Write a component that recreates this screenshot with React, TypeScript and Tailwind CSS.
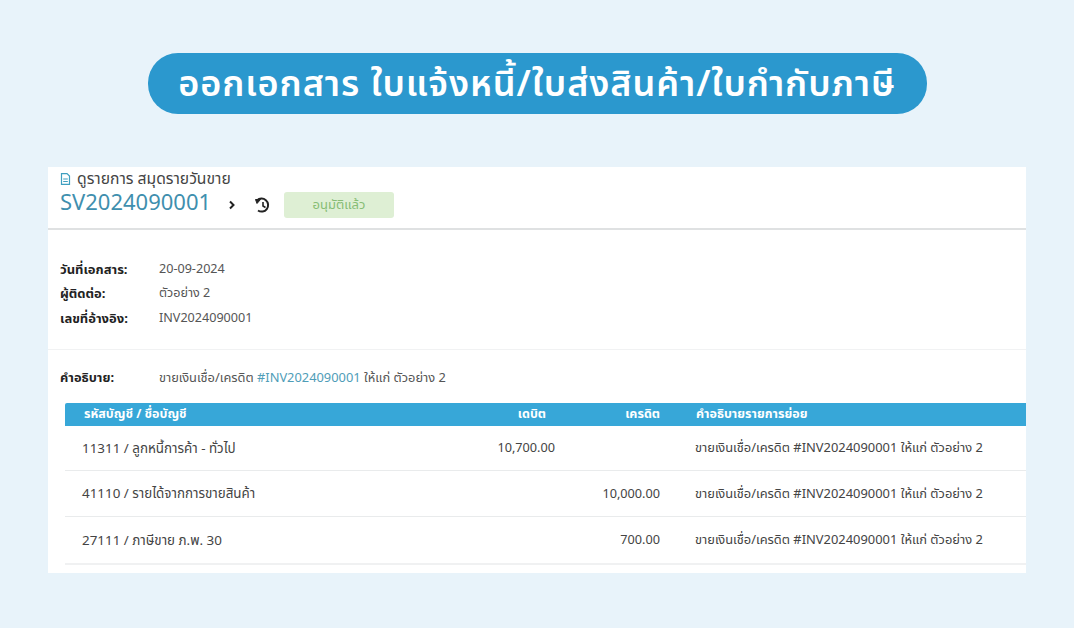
const font = { fontFamily: '"Noto Sans Thai", "Noto Sans", "Open Sans", "Liberation Sans", "DejaVu Sans", sans-serif' };

const desc = "ขายเงินเชื่อ/เครดิต #INV2024090001 ให้แก่ ตัวอย่าง 2";
const rows = [
  { name: "11311 / ลูกหนี้การค้า - ทั่วไป", debit: "10,700.00", credit: "" },
  { name: "41110 / รายได้จากการขายสินค้า", debit: "", credit: "10,000.00" },
  { name: "27111 / ภาษีขาย ภ.พ. 30", debit: "", credit: "700.00" },
];
const info = [
  ["วันที่เอกสาร:", "20-09-2024"],
  ["ผู้ติดต่อ:", "ตัวอย่าง 2"],
  ["เลขที่อ้างอิง:", "INV2024090001"],
];

export default function App() {
  return (
    <div className="w-[1074px] h-[628px] overflow-hidden bg-[#e8f3fa] pt-[53px] flex flex-col items-center" style={font}>
      <div className="w-[779px] h-[61px] pt-[3px] rounded-[30px] bg-[#2b98ce] flex items-center justify-center text-white text-[36px] tracking-[0.9px] font-semibold whitespace-nowrap">
        ออกเอกสาร ใบแจ้งหนี้/ใบส่งสินค้า/ใบกำกับภาษี
      </div>

      <div className="w-[978px] h-[406px] mt-[53px] bg-white text-[#444]">
        <div className="h-[63px] border-b-2 border-[#dfe1e2] pl-[12px] pt-[2px]">
          <div className="flex items-center gap-[6px] h-[20px] leading-[20px] text-[15.7px] text-[#444]">
            <svg width="11" height="12" viewBox="0 0 11 12" fill="none" stroke="#3f9fc0" strokeWidth="1.2">
              <path d="M1.5.6h5.5l2.5 2.5v8.3h-8z" />
              <path d="M3.2 6h4.6M3.2 8.5h4.6" />
            </svg>
            <span>ดูรายการ สมุดรายวันขาย</span>
          </div>
          <div className="flex items-center h-[28px] mt-[2px]">
            <span className="text-[22px] leading-[26px] pb-[2px] text-[#3f8fae] w-[168px] whitespace-nowrap">SV2024090001</span>
            <svg width="8" height="10" viewBox="0 0 8 10" fill="none" stroke="#222" strokeWidth="2">
              <path d="M2 1.5 5.5 5 2 8.5" />
            </svg>
            <svg className="ml-[18px]" width="17" height="17" viewBox="0 0 17 17" fill="none" stroke="#222" strokeWidth="2">
              <path d="M3 3.5A6.5 6.5 0 1 1 4 13.5" />
              <path d="M1.5 2.5 6.5 2.5 3 6.5z" fill="#222" strokeWidth="1" />
              <path d="M9 5v4l2.5 1.5" strokeWidth="1.6" />
            </svg>
            <div className="ml-[13px] w-[110px] h-[26px] pt-[1px] rounded-[3px] bg-[#deefd4] text-[#86bd74] text-[13px] flex items-center justify-center">
              อนุมัติแล้ว
            </div>
          </div>
        </div>

        <div className="pl-[12px] pt-[28px] pb-[17px] border-b border-[#f1f2f3] flex flex-col">
          {info.map(([label, value]) => (
            <div key={label} className="flex items-center h-[24.5px] text-[13px]">
              <span className="w-[99px] font-bold text-[#222]">{label}</span>
              <span className="text-[#555] text-[12.6px]">{value}</span>
            </div>
          ))}
        </div>

        <div className="pl-[12px] h-[53px] pt-[6px] flex items-center text-[12.85px]">
          <span className="w-[99px] font-bold text-[#222]">คำอธิบาย:</span>
          <span className="text-[#555] whitespace-nowrap">
            ขายเงินเชื่อ/เครดิต <span className="text-[#4f9db8]">#INV2024090001</span> ให้แก่ ตัวอย่าง 2
          </span>
        </div>

        <div className="ml-[17px] w-[961px] border-b-2 border-[#f0f1f2]">
          <div className="h-[23px] pt-[2px] bg-[#37a7d8] text-white text-[12.5px] font-bold grid grid-cols-[400px_81px_114px_1fr] items-center rounded-tl-[2px] whitespace-nowrap">
            <span className="pl-[19px]">รหัสบัญชี / ชื่อบัญชี</span>
            <span className="text-right">เดบิต</span>
            <span className="text-right">เครดิต</span>
            <span className="pl-[36px]">คำอธิบายรายการย่อย</span>
          </div>
          {rows.map((r, i) => (
            <div key={r.name} className={`h-[45.7px] pt-[2px] grid grid-cols-[400px_90px_105px_1fr] items-center text-[12.9px] text-[#444] whitespace-nowrap ${i < 2 ? "border-b border-[#e9ebec]" : ""}`}>
              <span className="pl-[17px] text-[13.4px]">{r.name}</span>
              <span className="text-right text-[12.7px]">{r.debit}</span>
              <span className="text-right text-[12.7px]">{r.credit}</span>
              <span className="pl-[35px]">{desc}</span>
            </div>
          ))}
        </div>
      </div>
    </div>
  );
}
